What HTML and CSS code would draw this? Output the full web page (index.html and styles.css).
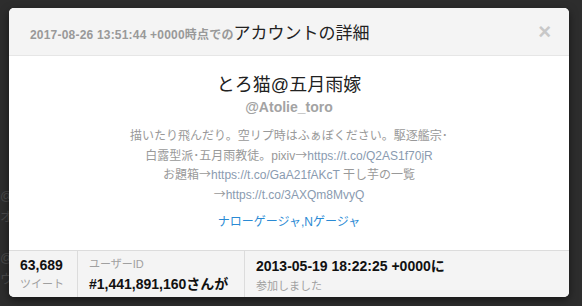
FILE: index.html
```html
<!DOCTYPE html>
<html lang="ja">
<head>
  <meta charset="UTF-8">
  <title>アカウントの詳細</title>
  <link rel="stylesheet" href="styles.css">
</head>
<body>
  <div class="backdrop">
    <span class="ghost g1">@</span>
    <span class="ghost g2">オ</span>
    <span class="ghost g3">@</span>
    <span class="ghost g4">ウ</span>
  </div>

  <div class="modal">
    <div class="modal-header">
      <h3 class="modal-title"><small>2017-08-26 13:51:44 +0000時点での</small>アカウントの詳細</h3>
      <span class="close">&times;</span>
    </div>

    <div class="modal-body">
      <h2 class="fullname">とろ猫@五月雨嫁</h2>
      <p class="screen-name">@Atolie_toro</p>
      <p class="bio">
        描いたり飛んだり。空リプ時はふぁぼください。駆逐艦宗･<br>
        白露型派･五月雨教徒。pixiv<span class="arrow">→</span><span class="link">https://t.co/Q2AS1f70jR</span><br>
        お題箱<span class="arrow">→</span><span class="link">https://t.co/GaA21fAKcT</span> 干し芋の一覧<br>
        <span class="arrow">→</span><span class="link">https://t.co/3AXQm8MvyQ</span>
      </p>
      <p class="location">ナローゲージャ,Nゲージャ</p>
    </div>

    <div class="modal-footer">
      <div class="stat stat-tweets">
        <strong>63,689</strong>
        <span>ツイート</span>
      </div>
      <div class="stat stat-id">
        <span>ユーザーID</span>
        <strong>#1,441,891,160さんが</strong>
      </div>
      <div class="stat stat-joined">
        <strong>2013-05-19 18:22:25 +0000に</strong>
        <span>参加しました</span>
      </div>
    </div>
  </div>
</body>
</html>
```

FILE: styles.css
```css
body {
  margin: 0;
  background-color: #2d2d2d;
  font-family: "Liberation Sans", "Noto Sans CJK JP", sans-serif;
  width: 582px;
  height: 306px;
  overflow: hidden;
  position: relative;
}

/* faint page content behind the overlay */
.backdrop {
  position: absolute;
  inset: 0;
}

.ghost {
  position: absolute;
  left: 0;
  color: #4a4a4a;
  font-size: 13px;
}

.g1 { top: 188px; }
.g2 { top: 206px; }
.g3 { top: 250px; }
.g4 { top: 268px; }

.modal {
  position: relative;
  margin: 8px 0 0 9px;
  width: 560px;
  background-color: white;
  border-radius: 5px;
  overflow: hidden;
  box-shadow: 0 3px 9px rgba(0, 0, 0, 0.5);
}

.modal-header {
  display: flex;
  align-items: center;
  justify-content: space-between;
  height: 47px;
  padding: 0 21px;
  background-color: #f4f4f4;
  border-bottom: 1px solid #e6e6e6;
}

.modal-title {
  margin: 0;
  font-size: 17px;
  font-weight: normal;
  color: #222;
}

.modal-title small {
  font-size: 12px;
  font-weight: bold;
  color: #999;
  letter-spacing: 0.2px;
}

.close {
  font-size: 22px;
  font-weight: bold;
  color: #c8c8c8;
  margin-right: -3px;
  line-height: 1;
}

.modal-body {
  height: 194px;
  padding-top: 17px;
  box-sizing: border-box;
  text-align: center;
}

.fullname {
  margin: 0;
  font-size: 18px;
  font-weight: normal;
  color: #222;
  line-height: 24px;
}

.screen-name {
  margin: 0;
  font-size: 14px;
  font-weight: bold;
  color: #a3a3a3;
  line-height: 20px;
}

.bio {
  margin: 10px 0 0;
  font-size: 12px;
  color: #999;
  line-height: 18.5px;
}

.arrow {
  font-family: "Noto Sans CJK JP", sans-serif;
}

.link {
  color: #8a9bb0;
}

.location {
  margin: 8px 0 0;
  font-size: 12px;
  color: #2a8ad4;
}

.modal-footer {
  display: flex;
  height: 46px;
  background-color: #f4f4f4;
  border-top: 1px solid #dcdcdc;
}

.stat {
  display: flex;
  flex-direction: column;
  justify-content: center;
  gap: 2px;
  padding: 0 11px;
  border-right: 1px solid #dcdcdc;
}

.stat strong {
  font-size: 14px;
  color: #111;
}

.stat span {
  font-size: 11px;
  color: #a0a0a0;
}

.stat-tweets {
  width: 69px;
  box-sizing: border-box;
}

.stat-id {
  width: 167px;
  box-sizing: border-box;
}

.stat-joined {
  border-right: none;
}
```
